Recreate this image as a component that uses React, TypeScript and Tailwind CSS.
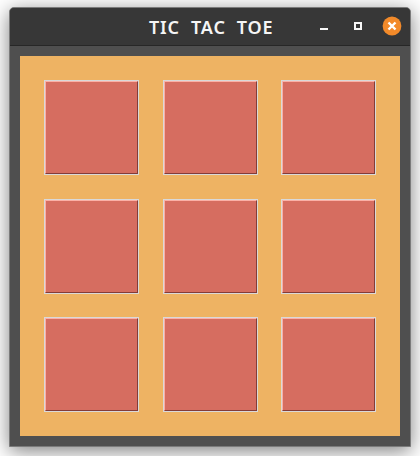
const cells = Array.from({ length: 9 }, (_, i) => i);

function Cell() {
  return (
    <button
      type="button"
      className="block border border-[#d9d9d9] bg-[#d66d60]"
    >
      <span className="block h-full w-full border border-t-[#fbb0a6] border-l-[#fbb0a6] border-r-[#833c38] border-b-[#833c38]" />
    </button>
  );
}

function TitleBar() {
  return (
    <header className="flex h-[38px] items-center justify-between border-b border-[#272727] bg-[#373737] pr-2 pl-[139px]">
      <h1 className="font-['Noto_Sans',sans-serif] text-[18px] leading-[28px] font-semibold tracking-[0.85px] whitespace-pre text-[#f5f5f5]">
        {"TIC  TAC  TOE"}
      </h1>
      <svg className="mb-[2px]" width="84" height="20" viewBox="0 0 84 20">
        <rect x="2" y="12" width="8" height="2" fill="#f7f7f7" />
        <rect x="37" y="7" width="6" height="6" fill="none" stroke="#f7f7f7" strokeWidth="2" />
        <circle cx="74" cy="10" r="9.4" fill="#f28a2a" />
        <path d="M70.5 6.5l7 7M77.5 6.5l-7 7" stroke="#fff" strokeWidth="2.4" />
      </svg>
    </header>
  );
}

export default function App() {
  return (
    <div className="h-[456px] w-[420px] overflow-hidden bg-white pt-[7px] pl-[9px]">
      <div className="h-[440px] w-[402px] overflow-hidden rounded-t-[5px] border border-[#7b7b7b] bg-[#4f4f4f] shadow-[0_4px_20px_rgba(0,0,0,0.5)]">
        <TitleBar />
        <main className="mx-[10px] mt-[10px] grid h-[380px] w-[380px] grid-cols-[95px_95px_95px] grid-rows-[95px_95px_95px] content-between justify-between bg-[#eeb363] p-6">
          {cells.map((i) => (
            <Cell key={i} />
          ))}
        </main>
      </div>
    </div>
  );
}
